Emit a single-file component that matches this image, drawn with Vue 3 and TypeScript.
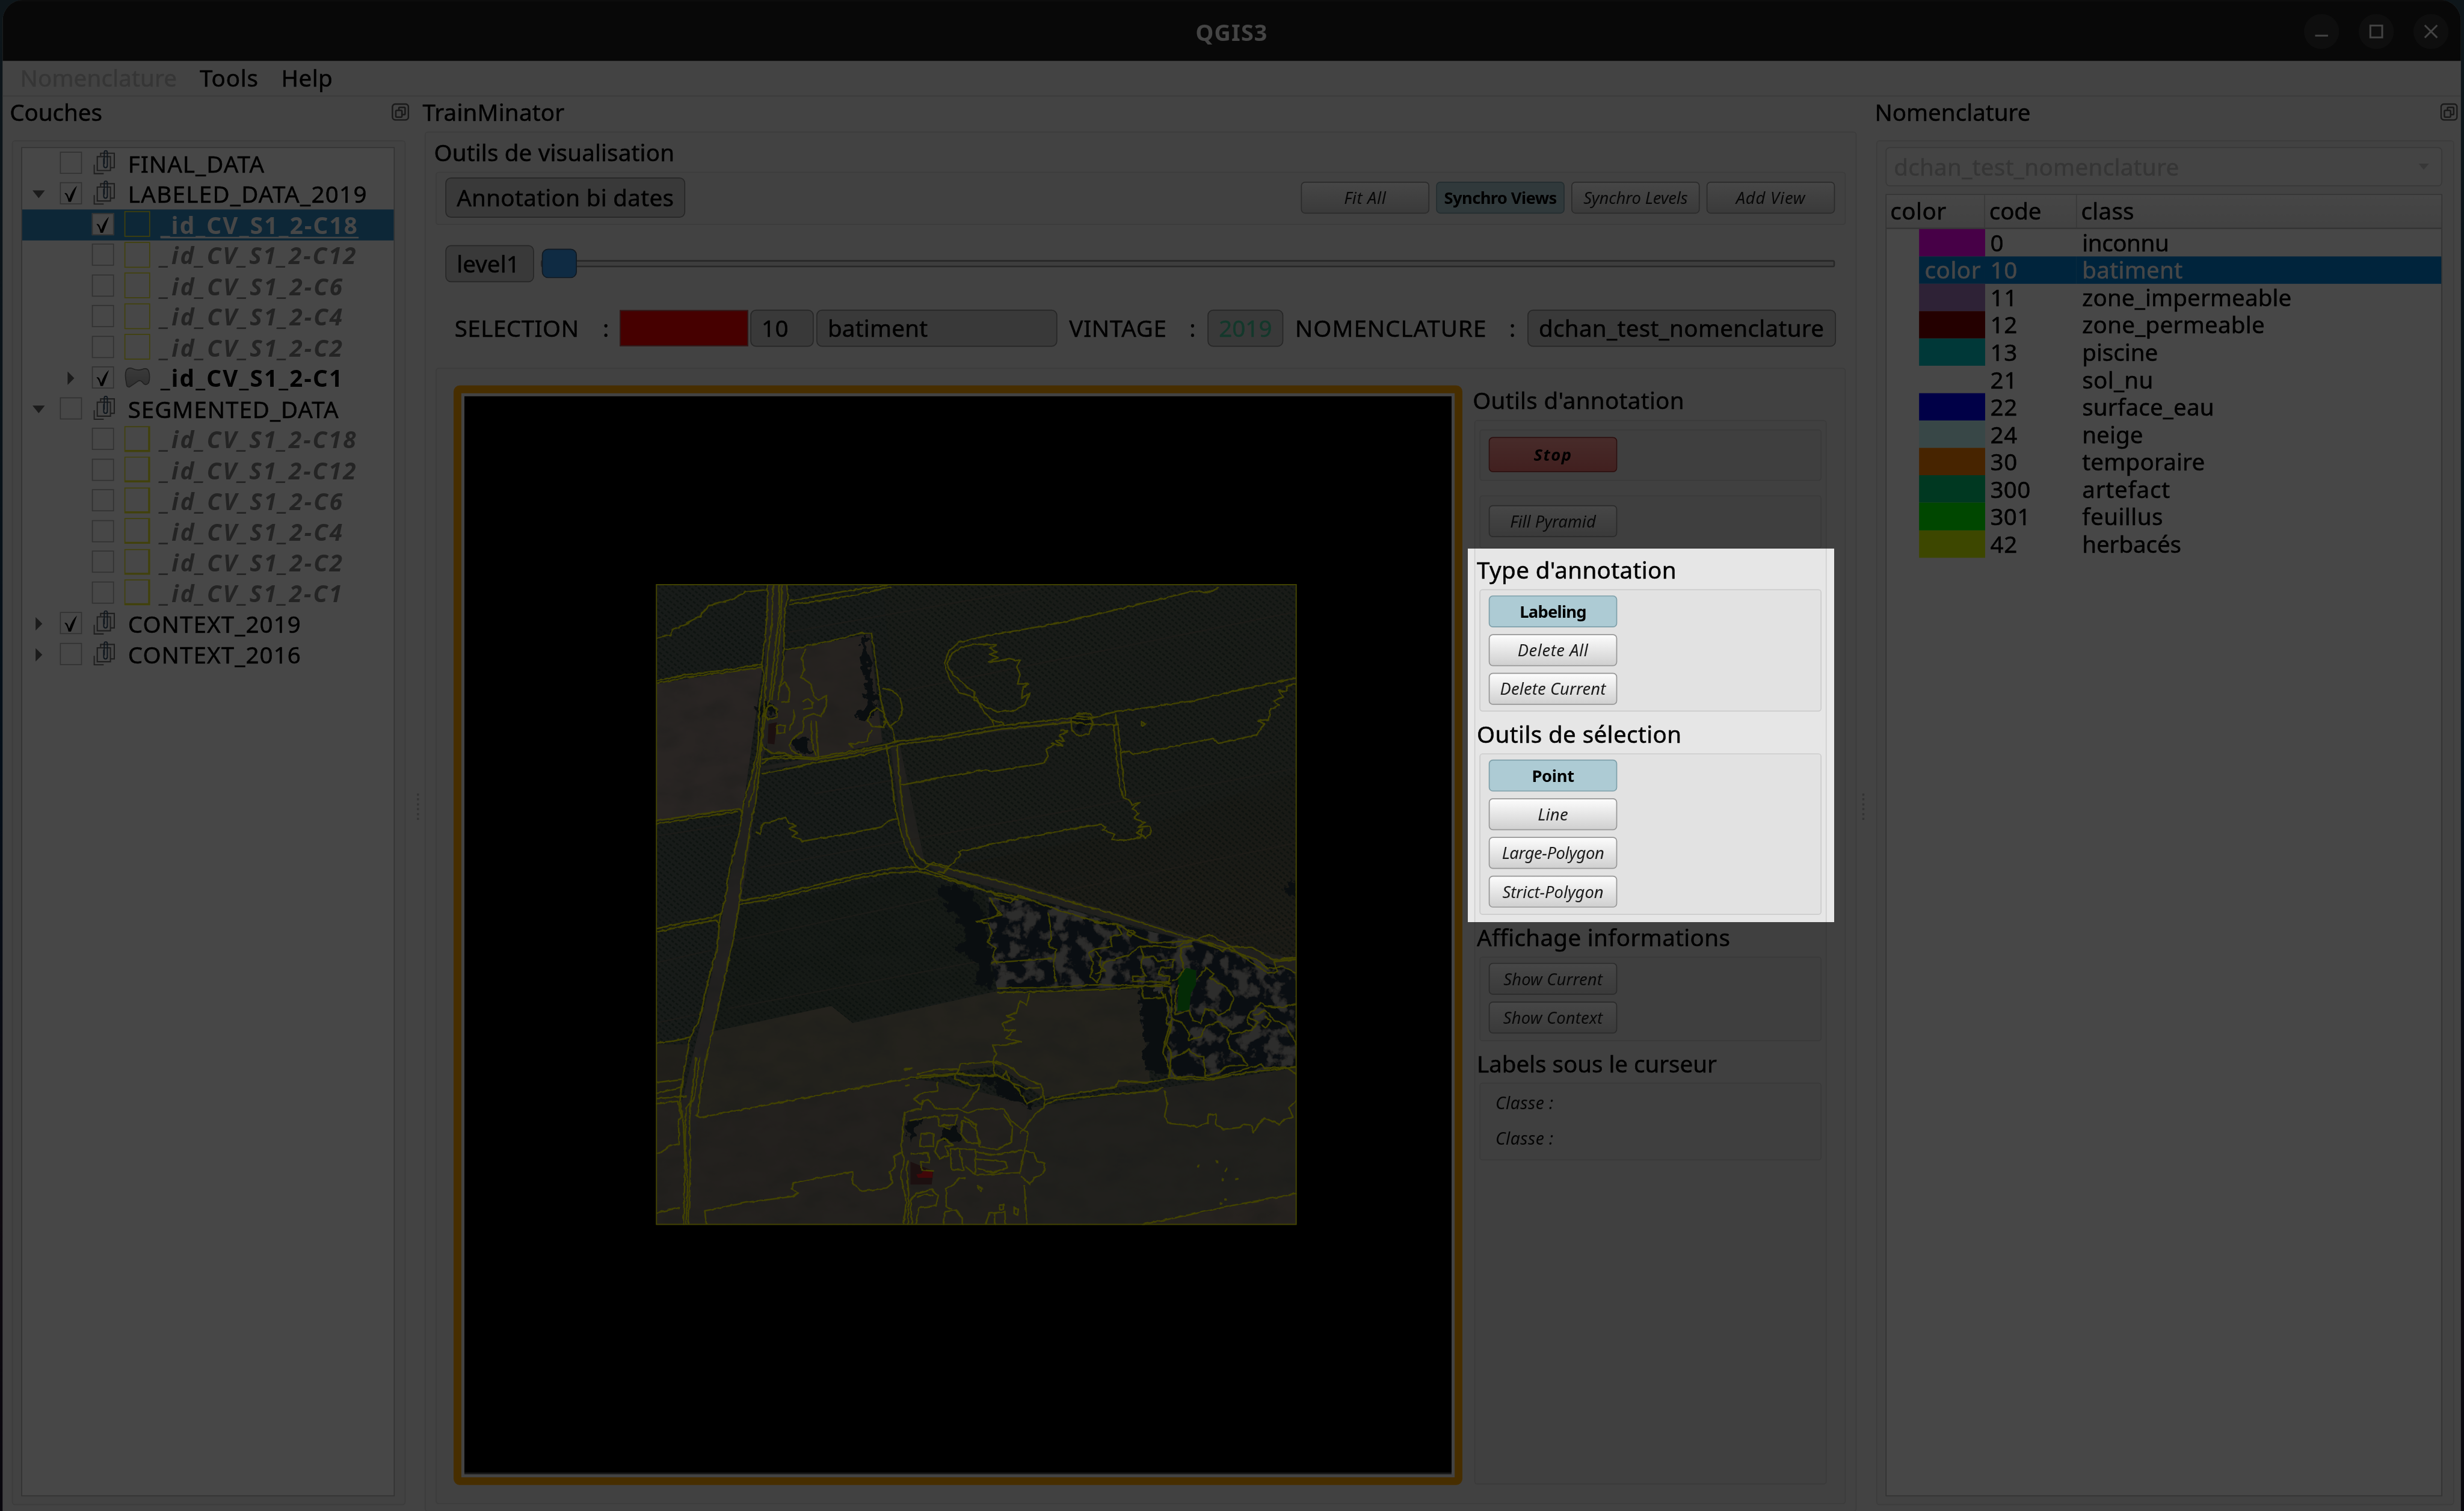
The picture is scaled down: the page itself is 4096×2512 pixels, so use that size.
<script setup lang="ts">
type Kind = 'group' | 'layer' | 'vector'
interface TreeRow {
  label: string
  w: number
  kind: Kind
  arrow?: 'down' | 'right'
  checked?: boolean
  selected?: boolean
  strong?: boolean
  thick?: boolean
}
interface ClassRow {
  code: string
  name: string
  w: number
  color: string
  selected?: boolean
}
interface Btn {
  label: string
  w: number
  on?: boolean
}

const SCALE = 4096 / 4775

// Spreads the letters of a label so that it takes the given width.
const vFit = {
  mounted(el: HTMLElement, binding: { value: number }) {
    const n = (el.textContent ?? '').length
    const natural = el.getBoundingClientRect().width / SCALE
    el.style.letterSpacing = `${((binding.value + 3 - natural) / n).toFixed(3)}px`
  },
}

const tree: TreeRow[] = [
  { label: 'FINAL_DATA', w: 262, kind: 'group' },
  { label: 'LABELED_DATA_2019', w: 461, kind: 'group', arrow: 'down', checked: true },
  { label: '_id_CV_S1_2-C18', w: 381, kind: 'layer', checked: true, selected: true },
  { label: '_id_CV_S1_2-C12', w: 379, kind: 'layer' },
  { label: '_id_CV_S1_2-C6', w: 353, kind: 'layer' },
  { label: '_id_CV_S1_2-C4', w: 353, kind: 'layer' },
  { label: '_id_CV_S1_2-C2', w: 353, kind: 'layer' },
  { label: '_id_CV_S1_2-C1', w: 352, kind: 'vector', arrow: 'right', checked: true, strong: true },
  { label: 'SEGMENTED_DATA', w: 406, kind: 'group', arrow: 'down' },
  { label: '_id_CV_S1_2-C18', w: 379, kind: 'layer', thick: true },
  { label: '_id_CV_S1_2-C12', w: 379, kind: 'layer', thick: true },
  { label: '_id_CV_S1_2-C6', w: 353, kind: 'layer', thick: true },
  { label: '_id_CV_S1_2-C4', w: 353, kind: 'layer', thick: true },
  { label: '_id_CV_S1_2-C2', w: 353, kind: 'layer', thick: true },
  { label: '_id_CV_S1_2-C1', w: 352, kind: 'layer', thick: true },
  { label: 'CONTEXT_2019', w: 333, kind: 'group', arrow: 'right', checked: true },
  { label: 'CONTEXT_2016', w: 333, kind: 'group', arrow: 'right' },
]

const classes: ClassRow[] = [
  { code: '0', name: 'inconnu', w: 165, color: '#ff00ff' },
  { code: '10', name: 'batiment', w: 192, color: '#0080d8', selected: true },
  { code: '11', name: 'zone_impermeable', w: 403, color: '#a47ac2' },
  { code: '12', name: 'zone_permeable', w: 351, color: '#800000' },
  { code: '13', name: 'piscine', w: 144, color: '#00c8c8' },
  { code: '21', name: 'sol_nu', w: 135, color: '#ffffff' },
  { code: '22', name: 'surface_eau', w: 253, color: '#0000ff' },
  { code: '24', name: 'neige', w: 115, color: '#c8ffff' },
  { code: '30', name: 'temporaire', w: 235, color: '#ff8000' },
  { code: '300', name: 'artefact', w: 168, color: '#00c878' },
  { code: '301', name: 'feuillus', w: 154, color: '#00ff00' },
  { code: '42', name: 'herbacés', w: 189, color: '#dcff00' },
]

const viewButtons: Btn[] = [
  { label: 'Fit All', w: 79 },
  { label: 'Synchro Views', w: 215, on: true },
  { label: 'Synchro Levels', w: 199 },
  { label: 'Add View', w: 132 },
]
const typeButtons: Btn[] = [
  { label: 'Labeling', w: 126, on: true },
  { label: 'Delete All', w: 134 },
  { label: 'Delete Current', w: 202 },
]
const selectButtons: Btn[] = [
  { label: 'Point', w: 79, on: true },
  { label: 'Line', w: 56 },
  { label: 'Large-Polygon', w: 195 },
  { label: 'Strict-Polygon', w: 193 },
]
const infoButtons: Btn[] = [
  { label: 'Show Current', w: 189 },
  { label: 'Show Context', w: 190 },
]

// Outlines of the segmentation, in map units.
const outlines: string[] = [
  // main road
  'M290 28L289 90L284 160L276 215L282 240L270 320L268 400L262 440L232 550L224 610L200 700L190 770L178 810L172 880L150 960L130 1050L108 1095L92 1180L84 1240L92 1300L96 1400L92 1534',
  'M303 28L300 120L290 200L284 290L280 330L274 400L266 450L258 510L244 552',
  'M318 28L316 110L306 190L300 250L294 300L286 330L276 400L270 470L262 540L252 580L240 660L228 730L222 790L206 880L190 950L170 1040L150 1120L136 1190L124 1280',
  'M324 28L320 130L312 220L303 270L300 300',
  'M335 28L338 60L330 90L328 180L324 250L318 270L316 300',
  'M122 1140L112 1220L106 1290L108 1400L104 1534M130 1140L126 1180L116 1240L98 1260L96 1340L102 1440L98 1534',
  'M120 1276L132 1282L620 1190L650 1184L740 1178L780 1184L822 1186',
  // left fields
  'M28 154L44 150L60 148L66 134L98 122L112 112L130 104L152 78L176 72L212 60L236 46L290 40',
  'M28 254L100 240L200 228L276 216M28 261L100 246L200 234L278 222',
  'M28 584L120 570L222 556L232 566M28 591L120 577L220 562',
  'M28 838L100 822L160 812L180 802M28 846L100 830L168 818L176 826',
  'M28 1107L70 1102L108 1094M28 1200L88 1192M28 1226L90 1210M28 1238L100 1232M28 1250L80 1244L86 1280L80 1290L82 1344L58 1350L44 1362L28 1368M28 1506L84 1494',
  // upper field by the farm
  'M342 66L380 60L470 44L572 30M340 75L400 68L500 52L582 34',
  'M326 182L356 178L400 168L450 158L512 142L534 142L546 220L556 300L570 350L584 372L590 400',
  'M380 180L370 200L376 230L368 246L392 262L398 290L410 300L430 288L428 310L416 340L398 332L376 340L372 372L352 390L340 406L348 420L372 432',
  'M404 348L410 440M392 348L394 400L404 430M372 304L384 296L396 306L396 318L372 322M316 270L330 258L342 280L340 304L322 306M274 400L284 416L300 424L330 424L348 436L400 440',
  'M286 320L300 312L312 322L312 340L292 346L282 336ZM350 322L354 340L340 372M312 360L330 360L330 378L312 378Z',
  'M560 272L584 278L602 296L608 324L598 346L580 360L562 350M532 330L546 320L562 328L568 346L564 364L540 362L524 350ZM536 370L528 382L526 396L500 402L480 404L492 412',
  // east-west track
  'M276 440L330 430L400 436L500 418L570 404L600 396L700 384L820 362L1005 342L1040 346L1112 326L1150 322L1290 302L1400 276L1534 248',
  'M274 472L300 470L400 448L520 428L580 410L602 404L700 392L840 368L1005 352L1056 358L1112 358L1108 332',
  'M276 450L290 440L340 436L410 440L560 412',
  'M1004 344L1020 336L1048 340L1056 358L1046 380L1024 384L1006 372ZM1016 332L1050 332L1054 344',
  'M822 360L818 348L844 354L846 360M1170 350L1178 356L1170 360Z',
  // rounded parcel
  'M1350 34L1330 46L1290 44L1150 78L980 118L800 150L740 164L716 186L706 214L718 250L740 282L780 294L800 330L822 350',
  'M830 170L780 168L744 176L724 190L712 214L726 240L758 268L776 280L776 300L800 314L830 328L872 324L896 310L906 284L888 296L890 270L904 262L878 262L884 240L876 222L884 208L858 202L834 208L810 210L832 200L812 192L830 186L812 178L830 170',
  // middle parcels
  'M568 404L580 470L590 550L606 620L620 660L640 690L650 700M594 404L600 480L608 560L620 620L640 664L664 684',
  'M604 500L700 482L800 464L820 468L940 448L950 430L944 416L964 406L958 402L984 408L968 394L990 396L976 384L996 374L980 370',
  'M1104 358L1110 420L1118 500L1126 530L1140 534L1148 546L1166 540L1148 556L1164 566L1152 578L1178 588L1160 600L1190 596L1194 608L1180 624L1158 612L1172 604L1168 622L1140 630L1100 628L1108 616L1078 606L1086 598L1070 592L900 622L740 656L744 664L716 692',
  'M1114 358L1122 440L1132 528M1122 424L1140 420L1150 428L1340 390L1350 402L1440 382L1458 356L1444 348L1468 346L1474 320L1494 312L1480 302L1504 292L1492 278L1512 280L1510 268L1534 262',
  'M262 610L272 616L278 592L332 576L340 590L358 596L340 602L360 612L348 620L372 632L480 614L560 598L572 586L598 578',
  // diagonal road
  'M222 772L300 760L400 736L500 712L570 698L640 692L700 712L780 740L840 762L880 770',
  'M222 781L300 768L400 744L500 720L580 706L650 704L720 724L800 748L900 768L980 796L1060 820',
  'M664 684L740 702L820 722L900 744L1000 774L1100 802L1200 834L1290 862L1370 884L1410 900L1440 910L1466 932L1500 926L1534 942',
  'M650 700L680 682L716 692L706 706L690 704M1060 822L1120 830L1150 852L1200 872L1290 866L1330 852L1380 880L1430 882L1480 912L1534 906M1300 862L1360 890L1380 880L1400 898L1466 942L1490 940L1480 916L1534 910',
  // woods
  'M812 764L820 780L836 800L820 812L782 820L810 826L818 850L808 870L826 884L820 904L830 922M824 766L860 776L880 758L910 770M816 810L840 806L830 800',
  'M816 918L960 908M950 800L958 850L952 880L970 886L962 920L968 964M830 978L950 976L1060 970L1240 974M830 988L950 986L1100 980L1150 976L1240 966',
  'M1056 820L1110 828L1124 850L1096 858L1100 880L1060 886L1046 896L1056 920L1050 950L1066 966M1066 966L1080 920L1110 908L1140 900L1166 880L1200 878L1250 884L1264 874L1290 868',
  'M1166 878L1174 900L1168 930L1180 950L1150 950L1150 962L1234 964L1236 950L1210 946L1216 930L1240 930L1248 910L1206 914L1200 904L1172 906M1060 890L1074 906L1070 924L1084 936L1062 944M1140 840L1154 846L1146 856L1136 850Z',
  'M1170 976L1174 1002L1222 1000L1218 986M1240 960L1254 956L1270 934L1262 900L1264 882L1290 878M1224 990L1234 1030L1228 1060L1240 1066L1228 1110L1240 1130L1234 1190M1240 976L1240 1050L1226 1100L1220 1130L1236 1170L1250 1186',
  'M1300 958L1322 930L1340 944L1330 954L1370 976L1386 1000L1376 1030L1350 1042L1340 1030L1318 1028L1310 1060L1290 1054L1282 1030L1250 1040L1250 990L1256 970M1240 1050L1264 1058L1282 1084L1280 1100L1310 1092L1320 1068L1350 1056L1380 1080L1372 1096L1376 1120L1404 1136L1420 1160',
  'M1240 1140L1260 1136L1280 1122L1298 1136L1316 1138L1320 1190M1380 1086L1430 1076L1444 1058L1420 1044L1418 1060L1434 1070M1420 1044L1450 1012L1460 1020L1500 1024L1534 1014M1434 1042L1460 1030L1480 1052L1510 1066L1534 1112M1452 1064L1462 1072L1474 1056L1460 1042',
  'M1236 1190L1280 1186L1340 1190L1420 1166L1450 1158L1460 1166L1510 1164L1534 1180M1420 1160L1370 1162L1350 1178L1320 1184',
  // lower parcels
  'M940 1240L1000 1228L1110 1210L1116 1196L1180 1200L1240 1190L1330 1194L1420 1176L1534 1164M940 1254L970 1240L1100 1228L1200 1220L1220 1212L1198 1218',
  'M1224 1220L1230 1250L1224 1280L1232 1296L1280 1300L1300 1304L1326 1294L1326 1276L1346 1274L1344 1298L1360 1310L1400 1306L1410 1298L1426 1300L1434 1318L1446 1296L1460 1284L1494 1298L1506 1286L1526 1280L1516 1260L1534 1242',
  'M1170 1534L1260 1516L1400 1486L1534 1462M1302 1395h3v3h-3ZM1347 1385h3v3h-3ZM1372 1400l-6 10M1360 1426h3v3h-3ZM1392 1426h3v3h-3ZM1366 1473h3v3h-3ZM1354 1483h3v3h-3Z',
  'M906 990L900 1018L884 1008L876 1034L852 1044L872 1050L842 1060L848 1078L872 1076L852 1096L886 1104L850 1112L818 1112L828 1130L820 1150L840 1160',
  'M612 1168L630 1166L616 1172ZM612 1206h12M640 1180L680 1170L740 1168L744 1156L830 1150L870 1168L880 1182L920 1200L934 1206L942 1240L940 1260L920 1272L908 1290L884 1320',
  'M640 1190L740 1180L830 1184L860 1196L880 1216L900 1250L936 1232M820 1150L824 1180L844 1190L850 1172L862 1200L900 1214L930 1212M740 1168L730 1190L768 1206L790 1206L768 1240L750 1262',
  'M690 1198L690 1220L650 1226L634 1240L650 1250L666 1240L690 1262L740 1262L760 1272L790 1262L848 1262L862 1290L904 1320L894 1360L884 1412L780 1418',
  // farmstead
  'M610 1534L616 1480L604 1420L612 1380L604 1360L612 1270L650 1262L656 1240M620 1534L622 1460L616 1400L622 1384M624 1290L660 1282L690 1280L694 1300L720 1310M626 1368L668 1366L670 1388L650 1386L652 1406L680 1408M650 1320L680 1320L680 1350L648 1350Z',
  'M698 1278L738 1276L730 1300L700 1300M748 1290L764 1294L780 1310L790 1344L760 1340L744 1320ZM752 1280L780 1300L788 1350L830 1358L864 1340L866 1304L846 1274M720 1356L740 1356L752 1406L722 1404ZM740 1356L780 1358L778 1416L756 1398M780 1364L820 1370L890 1360',
  'M690 1340L706 1330L726 1348L706 1350L716 1372L694 1380L684 1362ZM780 1380L850 1386L854 1400L820 1412L784 1402M896 1360L916 1366L924 1384L942 1390L940 1414L916 1424L908 1440L886 1420M756 1424L740 1426L728 1440L710 1450L710 1490L724 1498',
  'M630 1534L626 1478L640 1460L676 1452L692 1466L686 1490L646 1494L638 1534M640 1470L660 1462L680 1466M894 1440L900 1534M784 1444L796 1448L792 1456ZM704 1534L708 1504L734 1500L748 1520L748 1534M802 1534L812 1508L848 1504L850 1534M824 1534V1506M870 1494L880 1498L878 1512L870 1508ZM836 1488h10v10h-10Z',
  'M146 1534L142 1502L240 1482L350 1468L362 1460L346 1450L350 1436L400 1426L490 1410L490 1436L512 1456L570 1448L584 1436L576 1410L590 1398L588 1374L606 1362',
]
const furrows: string[] = [
  'M340 140L940 34', 'M600 280L1534 92', 'M400 520L600 486', 'M28 620L220 590', 'M270 694L1000 560L1534 460',
  'M210 866L690 766', 'M980 750L1534 636', 'M28 918L160 888', 'M196 1026L780 916', 'M1330 870L1534 832', 'M28 1060L140 1036',
]
</script>

<template>
  <div class="stage">
    <div class="desk" :style="{ transform: `scale(${SCALE})` }">
      <div class="window">
        <header class="titlebar">
          <span class="side"></span>
          <span v-fit="137" class="t app-title">QGIS3</span>
          <span class="side controls">
            <svg v-for="k in 3" :key="k" class="ctl" viewBox="-34 -34 68 68">
              <circle r="34" fill="#343434" />
              <path v-if="k === 1" d="M-12.500 8H12.500" />
              <rect v-else-if="k === 2" x="-11.500" y="-11.500" width="23" height="23" />
              <path v-else d="M-12 -12L12 12M12 -12L-12 12" />
            </svg>
          </span>
        </header>

        <nav class="menubar">
          <span v-fit="301" class="t disabled">Nomenclature</span>
          <span v-fit="111" class="t">Tools</span>
          <span v-fit="97" class="t">Help</span>
        </nav>

        <main class="main">
          <section class="dock left">
            <div class="dock-title">
              <span v-fit="176" class="t">Couches</span>
              <svg class="float" viewBox="0 0 34 34">
                <rect x="1.500" y="1.500" width="31" height="31" rx="6" />
                <rect x="8" y="14" width="12" height="13" rx="2" />
                <path d="M14 13V9.500Q14 8 15.500 8H24.500Q26 8 26 9.500V20.500Q26 22 24.500 22H21" />
              </svg>
            </div>
            <div class="frame left-frame">
              <div class="tree">
                <div v-for="(r, i) in tree" :key="i" class="row" :class="[r.kind, { selected: r.selected, strong: r.strong }]">
                  <span class="expander">
                    <svg v-if="r.arrow === 'down'" viewBox="0 0 26 26"><path d="M1 6H25L13 21Z" /></svg>
                    <svg v-else-if="r.arrow === 'right'" viewBox="0 0 26 26"><path d="M7 0L20 13L7 26Z" /></svg>
                  </span>
                  <span class="check">
                    <svg v-if="r.checked" viewBox="0 0 40 40"><path d="M7 20Q12 17 15 27L16.500 31Q22 14 32 5Q26 22 20 37H15Q13 25 7 20Z" /></svg>
                  </span>
                  <svg v-if="r.kind === 'group'" class="gicon" viewBox="0 0 42 47">
                    <path d="M14 11V6H40.500V34H34M7.500 12.500H33V39.500H7.500ZM1.500 28V45.500H20" />
                    <path class="clip" d="M20 16V30Q20 34 23.500 34Q27 34 27 30V5Q27 1 24 1Q21 1 21 5V27" />
                  </svg>
                  <svg v-else-if="r.kind === 'vector'" class="sym" viewBox="0 0 50 50">
                    <defs><linearGradient id="poly" x2="0" y2="1"><stop offset="0" stop-color="#d0d0d0" /><stop offset="1" stop-color="#a8a8a8" /></linearGradient></defs>
                    <path d="M4 10Q8 5 15 7Q25 12 34 9Q44 5 47 12Q51 24 47 35Q42 41 37 36Q31 28 26 32Q18 38 10 43Q4 44 4 36Q0 18 4 10Z" fill="url(#poly)" stroke="#777" stroke-width="2" />
                  </svg>
                  <span v-else class="sym box" :class="{ thick: r.thick }"></span>
                  <span v-fit="r.w" class="t name">{{ r.label }}</span>
                </div>
              </div>
            </div>
          </section>

          <div class="splitter first"><i v-for="k in 6" :key="k"></i></div>

          <section class="dock center">
            <div class="dock-title"><span v-fit="272" class="t">TrainMinator</span></div>
            <div class="frame center-frame">
              <div class="viz-title"><span v-fit="463" class="t">Outils de visualisation</span></div>
              <div class="frame viz">
                <span class="field w465"><span v-fit="418" class="t">Annotation bi dates</span></span>
                <div class="viz-buttons">
                  <button v-for="b in viewButtons" :key="b.label" class="btn" :class="{ on: b.on }"><span v-fit="b.w" class="t">{{ b.label }}</span></button>
                </div>
              </div>
              <div class="level">
                <span class="field w172"><span v-fit="119" class="t">level1</span></span>
                <div class="slider"><div class="handle"></div></div>
              </div>
              <div class="selection">
                <span v-fit="238" class="t cap">SELECTION</span><span class="t colon near">:</span>
                <span class="swatch-red"></span>
                <span class="field w123"><span v-fit="49" class="t">10</span></span>
                <span class="field w467"><span v-fit="191" class="t">batiment</span></span>
                <span v-fit="186" class="t cap">VINTAGE</span><span class="t colon">:</span>
                <span class="field w147"><span v-fit="100" class="t vintage">2019</span></span>
                <span v-fit="368" class="t cap">NOMENCLATURE</span><span class="t colon">:</span>
                <span class="field w598"><span v-fit="550" class="t">dchan_test_nomenclature</span></span>
              </div>
              <div class="frame view">
                <div class="canvas-frame">
                  <div class="canvas">
                    <svg class="map" viewBox="27 27 1508 1508">
                      <defs>
                        <pattern id="crop" width="11" height="11" patternUnits="userSpaceOnUse" patternTransform="rotate(38)">
                          <path d="M0 5H11" stroke="#20352c" stroke-width="4" stroke-dasharray="7 4" opacity=".7" />
                        </pattern>
                        <linearGradient id="dry" x1="0" y1="0" x2=".35" y2="1">
                          <stop offset="0" stop-color="#525c4e" />
                          <stop offset="1" stop-color="#66614f" />
                        </linearGradient>
                        <filter id="grain" x="0" y="0" width="1" height="1">
                          <feTurbulence type="fractalNoise" baseFrequency=".012 .02" numOctaves="5" seed="12" />
                          <feColorMatrix values="0 0 0 0 .1  0 0 0 0 .12  0 0 0 0 .1  1.500 0 0 0 -.55" />
                        </filter>
                        <filter id="blotch" x="0" y="0" width="1" height="1">
                          <feTurbulence type="fractalNoise" baseFrequency=".028" numOctaves="4" seed="4" />
                          <feColorMatrix values="0 0 0 0 .37  0 0 0 0 .36  0 0 0 0 .34  7 0 0 0 -3.500" />
                          <feComposite in2="SourceGraphic" operator="in" result="b" />
                          <feMerge><feMergeNode in="SourceGraphic" /><feMergeNode in="b" /></feMerge>
                        </filter>
                        <filter id="ragged" x="-.1" y="-.1" width="1.200" height="1.200">
                          <feTurbulence type="fractalNoise" baseFrequency=".05" numOctaves="3" seed="8" />
                          <feDisplacementMap in="SourceGraphic" scale="40" xChannelSelector="R" yChannelSelector="G" />
                        </filter>
                        <filter id="jag" x="-.05" y="-.05" width="1.100" height="1.100">
                          <feTurbulence type="fractalNoise" baseFrequency=".09" numOctaves="1" seed="3" />
                          <feDisplacementMap in="SourceGraphic" scale="7" xChannelSelector="R" yChannelSelector="G" />
                        </filter>
                      </defs>
                      <rect x="27" y="27" width="1508" height="1508" fill="#56635a" />
                      <path d="M560 30L1535 27V500L1130 640L660 680L600 404Z" fill="#5a6456" />
                      <path d="M720 690L1140 610L1535 470V940L1300 860L840 720Z" fill="url(#dry)" />
                      <path d="M225 790L640 710L800 760L830 980L480 1060L160 1110Z" fill="#4d5c4e" />
                      <rect x="27" y="27" width="1508" height="1508" fill="url(#crop)" />
                      <path d="M28 262L278 222L232 556L28 586Z" fill="#94857f" />
                      <path d="M334 184L530 144L560 400L410 436L290 420L280 330Z" fill="#8a7d74" />
                      <path d="M160 1080L440 1020L490 1060L830 985L906 990L1170 980L1190 1200L940 1235L830 1160L620 1190L124 1280Z" fill="#807b68" />
                      <path d="M28 1110H108L84 1240H28Z" fill="#75705e" />
                      <path d="M28 1240H90L96 1534H28ZM108 1280L620 1190L700 1200L900 1250L940 1280L900 1534H104Z" fill="#7f766c" />
                      <path d="M900 1260L1534 1166V1462L1170 1534H894Z" fill="#777469" />
                      <path d="M1170 1534L1534 1462V1534Z" fill="#8a7b70" />
                      <path d="M292 28H336L316 290L270 470L240 700L196 930L126 1250L106 1534H94L90 1240L160 940L192 760L232 560L274 390Z" fill="#7d7874" />
                      <path d="M274 456L570 408L1005 344V354L600 402L660 684L840 720L1300 858L1534 910V940L1300 872L840 746L690 706L610 640L580 414L276 466Z" fill="#7c786e" />
                      <g stroke="#7c6a5c" stroke-width="3" opacity=".6" fill="none"><path v-for="f in furrows" :key="f" :d="f" /></g>
                      <rect x="27" y="27" width="1508" height="1508" filter="url(#grain)" opacity=".5" />
                      <g filter="url(#blotch)">
                        <path d="M810 764L960 780L1110 826L1290 868L1400 900L1534 940V1166L1240 1190L1168 1060L1166 976L830 980L816 918Z" fill="#273642" />
                      </g>
                      <g filter="url(#ragged)" fill="#26343b">
                        <path d="M690 735L760 745L800 800L815 870L820 975L780 970L790 920L730 880L760 850L700 770Z" />
                        <path d="M1165 980H1232V1180L1180 1170Z" />
                        <path d="M508 150L520 150L545 320L530 350L495 340L525 315Z" />
                        <path d="M1508 740L1534 720V790ZM255 315L310 310L305 340L275 335ZM1010 340L1048 335L1045 360L1015 365ZM340 395L380 390L400 420L370 430ZM780 1180L850 1186L900 1230L910 1260L870 1250Z" />
                        <path d="M616 1290L650 1285L626 1350ZM700 1300L740 1310L740 1340L705 1335Z" />
                      </g>
                      <path d="M292 356L312 352L306 404L290 402ZM626 1386L680 1408L676 1440H626Z" fill="#663c3a" />
                      <path d="M640 1416L652 1414L656 1408H678V1424H644Z" fill="#ee1a22" />
                      <path d="M1256 944L1276 930L1298 936L1298 970L1286 990L1282 1030L1254 1032L1256 985Z" fill="#109b18" />
                      <g class="outline" filter="url(#jag)"><path v-for="o in outlines" :key="o" :d="o" /></g>
                      <rect class="outline" x="28" y="28" width="1506" height="1506" />
                    </svg>
                  </div>
                </div>
                <div class="tools">
                  <div class="tools-title"><span v-fit="407" class="t">Outils d'annotation</span></div>
                  <div class="frame tools-frame">
                    <div class="frame sub stop-box"><button class="btn stop"><span v-fit="72" class="t">Stop</span></button></div>
                    <div class="frame sub fill-box"><button class="btn"><span v-fit="163" class="t">Fill Pyramid</span></button></div>
                    <div class="sub-title first"><span v-fit="384" class="t">Type d'annotation</span></div>
                    <div class="frame sub h237">
                      <button v-for="b in typeButtons" :key="b.label" class="btn" :class="{ on: b.on }"><span v-fit="b.w" class="t">{{ b.label }}</span></button>
                    </div>
                    <div class="sub-title"><span v-fit="394" class="t">Outils de sélection</span></div>
                    <div class="frame sub h313">
                      <button v-for="b in selectButtons" :key="b.label" class="btn" :class="{ on: b.on }"><span v-fit="b.w" class="t">{{ b.label }}</span></button>
                    </div>
                    <div class="sub-title"><span v-fit="488" class="t">Affichage informations</span></div>
                    <div class="frame sub h164">
                      <button v-for="b in infoButtons" :key="b.label" class="btn"><span v-fit="b.w" class="t">{{ b.label }}</span></button>
                    </div>
                    <div class="sub-title last"><span v-fit="462" class="t">Labels sous le curseur</span></div>
                    <div class="frame sub labels">
                      <p><span v-fit="110" class="t">Classe :</span></p>
                      <p><span v-fit="110" class="t">Classe :</span></p>
                    </div>
                  </div>
                </div>
              </div>
            </div>
          </section>

          <div class="splitter"><i v-for="k in 6" :key="k"></i></div>

          <section class="dock right">
            <div class="dock-title">
              <span v-fit="299" class="t">Nomenclature</span>
              <svg class="float" viewBox="0 0 34 34">
                <rect x="1.500" y="1.500" width="31" height="31" rx="6" />
                <rect x="8" y="14" width="12" height="13" rx="2" />
                <path d="M14 13V9.500Q14 8 15.500 8H24.500Q26 8 26 9.500V20.500Q26 22 24.500 22H21" />
              </svg>
            </div>
            <div class="frame right-frame">
              <div class="combo">
                <span v-fit="550" class="t disabled">dchan_test_nomenclature</span>
                <svg viewBox="0 0 22 14"><path d="M1 1H21L11 13Z" fill="#c4c4c4" /></svg>
              </div>
              <div class="table">
                <div class="thead">
                  <span class="th c1"><span v-fit="106" class="t">color</span></span>
                  <span class="th c2"><span v-fit="98" class="t">code</span></span>
                  <span class="th c3"><span v-fit="100" class="t">class</span></span>
                </div>
                <div v-for="c in classes" :key="c.code" class="trow" :class="{ selected: c.selected }">
                  <span class="cell swatch" :style="{ background: c.color }"><span v-if="c.selected" v-fit="106" class="t">color</span></span>
                  <span class="cell code"><span v-fit="c.code.length * 25" class="t">{{ c.code }}</span></span>
                  <span class="cell cls"><span v-fit="c.w" class="t">{{ c.name }}</span></span>
                </div>
              </div>
            </div>
          </section>
        </main>
      </div>
      <div class="spotlight"></div>
    </div>
  </div>
</template>

<style>
html, body { margin: 0; background: #000; overflow: hidden; }
</style>

<style scoped>
* { box-sizing: border-box; }
.stage { width: 4096px; height: 2512px; overflow: hidden; background: #111; }
.desk {
  position: relative;
  width: 4775px;
  height: 2930px;
  transform-origin: 0 0;
  overflow: hidden;
  background: linear-gradient(#33505f 0, #24455c 25%, #10355c 50%, #302038 80%, #201a30 100%);
  font-family: "Noto Sans", "Open Sans", sans-serif;
  font-size: 45px;
  line-height: 50px;
  color: #000;
}
.t { display: inline-block; flex: none; margin-left: -1px; white-space: pre; -webkit-text-stroke: .6px currentColor; }
.disabled { color: #bebebe; }

.window {
  display: flex;
  flex-direction: column;
  height: 2930px;
  margin: 0 6px 0 5px;
  background: #efefef;
  border-radius: 40px 40px 0 0;
  overflow: hidden;
}
.titlebar {
  display: flex;
  flex: none;
  align-items: center;
  height: 118px;
  background: #1d1d1d;
  border-top: 3px solid #2e2e2e;
}
.side { flex: 1; display: flex; padding-left: 24px; }
.controls { justify-content: flex-end; gap: 38px; padding: 0 24px 0 0; }
.ctl { width: 68px; height: 68px; fill: none; stroke: #f0f0f0; stroke-width: 3.500; }
.ctl circle { stroke: none; }
.app-title { color: #f2f2f2; font-weight: 700; margin: 3px 0 0; font-size: 44px; -webkit-text-stroke: 0; }

.menubar {
  display: flex;
  flex: none;
  align-items: center;
  height: 69px;
  padding: 0 0 1px 35px;
  border-bottom: 2px solid #d0d0d0;
}
.menubar .t { margin: 0 45px 0 -1px; }

.main { display: flex; flex: 1; min-height: 0; }
.dock { display: flex; flex-direction: column; flex: none; }
.left { width: 788px; }
.center { width: 2785px; }
.right { flex: 1; }
.dock-title { display: flex; flex: none; align-items: center; justify-content: space-between; height: 60px; padding-left: 15px; }
.center .dock-title { padding-left: 5px; }
.right .dock-title { padding: 0 6px 0 12px; }
.float { width: 34px; height: 34px; fill: none; stroke: #5a5a5a; stroke-width: 3; }
.frame { background: rgba(0, 0, 0, .013); border: 2px solid rgba(0, 0, 0, .1); border-radius: 6px; }

.splitter { display: flex; flex: none; flex-direction: column; align-items: center; justify-content: center; gap: 5.400px; width: 22px; padding-top: 10px; }
.splitter.first { padding-left: 12px; }
.splitter i { width: 4px; height: 4px; background: #b4b4b4; }

.left-frame { width: 763px; height: 2645px; margin: 25px 0 0 18px; padding: 11px 19px 15px 16px; }
.tree { height: 100%; background: #fff; border: 2px solid #b2b2b2; }
.row { display: flex; align-items: center; height: 59.500px; }
.layer, .vector { padding-left: 62px; }
.expander { display: flex; justify-content: center; width: 64px; margin-right: 9px; }
.expander svg { width: 26px; height: 26px; fill: #616161; }
.check { display: flex; width: 43px; height: 43px; margin-bottom: 3px; background: #fff; border: 2px solid #b0b0b0; }
.check svg { width: 39px; height: 39px; }
.gicon { width: 42px; height: 47px; margin: 0 26px 5px 22px; fill: none; stroke: #6e6e6e; stroke-width: 2.500; }
.gicon .clip { stroke: #35506a; stroke-width: 2.300; }
.sym { width: 50px; height: 50px; margin: 0 20px 3px 20px; }
.sym.box { border: 2.500px solid #e8e82c; }
.sym.thick { border-right-width: 4px; border-bottom-width: 4px; }
.layer .name, .vector .name { margin-left: 0; -webkit-text-stroke: 0; }
.layer .name { font-weight: 700; font-style: italic; color: #808080; }
.row.selected { background: #308cc6; }
.row.selected .name { color: #fff; font-style: normal; text-decoration: underline; text-decoration-thickness: 3px; text-underline-offset: 6px; text-decoration-skip-ink: none; }
.strong .name { font-weight: 700; }

.center-frame { display: flex; flex-direction: column; width: 2775px; height: 2700px; margin: 8px 0 0 8px; }
.viz-title { display: flex; align-items: center; height: 76px; padding-left: 17px; }
.viz { display: flex; align-items: center; justify-content: space-between; height: 103px; margin: 0 19px; padding: 0 19px 3px 17px; }
.viz-buttons { display: flex; gap: 13px; }
.field { display: flex; flex: none; align-items: center; height: 72px; padding-left: 21px; background: #cbcbcb; border: 2px solid #8a8a8a; border-radius: 11px; }
.viz .field { height: 78px; }
.w465 { width: 465px; }
.w172 { width: 172px; }
.btn {
  display: flex;
  flex: none;
  align-items: center;
  justify-content: center;
  width: 249px;
  height: 62px;
  padding: 0;
  font: italic 32px/40px "Noto Sans", "Open Sans", sans-serif;
  color: #1c1c1c;
  background: linear-gradient(#fcfcfc, #d0d0d0);
  border: 2px solid #979797;
  border-radius: 8px;
}
.btn .t { margin: 0; -webkit-text-stroke: 0; }
.btn.on { font-style: normal; font-weight: 700; color: #000; background: #adcbd4; border-color: #7fa0aa; }
.level { display: flex; flex: none; align-items: center; height: 150px; padding: 0 40px 0 38px; }
.slider { position: relative; flex: 1; height: 14px; margin-left: 13px; background: #dadada; border: 3px solid #8c8c8c; border-radius: 4px; }
.handle { position: absolute; left: -1px; top: -25px; width: 68px; height: 57px; background: #3899f0; border: 2px solid #3c5a78; border-radius: 12px; }
.selection { display: flex; flex: none; align-items: center; height: 99px; padding-left: 57px; }
.selection .cap { margin-right: 44px; }
.selection .colon { width: 13px; margin: 0 22px 0 0; }
.selection .near { margin: 0 20px 0 2px; }
.swatch-red { flex: none; width: 249px; height: 70px; margin-right: 4px; background: #fa0000; border: 2px solid #a06060; }
.w123 { width: 123px; margin-right: 5px; }
.w467 { width: 467px; margin-right: 24px; }
.w147 { width: 147px; margin-right: 24px; }
.w598 { width: 598px; }
.vintage { color: #47c89a; }

.view { display: flex; flex: none; height: 2202px; margin: 28px 19px 0; padding: 32px 0 0 33px; }
.canvas-frame { flex: none; width: 1955px; height: 2131px; padding: 6px; border: 15px solid #ffa500; border-radius: 12px; background: #efefef; }
.canvas { height: 2089px; padding: 364px 0 0 371px; background: #000; border-bottom: 3px solid #606060; }
.map { display: block; width: 1242px; height: 1242px; }
.outline, .outline path { fill: none; stroke: #f2f200; stroke-width: 3.600; stroke-opacity: .95; stroke-linejoin: round; }

.tools { width: 687px; margin-left: 21px; }
.tools-title { display: flex; align-items: center; height: 67px; padding-bottom: 9px; }
.tools-frame { width: 683px; height: 2063px; margin-left: 2px; padding: 16px 8px 0; }
.sub { display: flex; flex-direction: column; gap: 13px; padding: 10px 16px 0; background: rgba(0, 0, 0, .016); }
.stop-box { height: 100px; padding-top: 13px; }
.stop { height: 68px; font-weight: 700; color: #000; background: linear-gradient(#ff9a95, #ea7270); border-color: #a33232; }
.fill-box { height: 103px; margin-top: 28px; padding-top: 17px; }
.sub-title { display: flex; align-items: center; height: 81px; padding-top: 7px; margin-left: -4px; }
.sub-title.first { height: 79px; padding-top: 5px; }
.sub-title.last { height: 80px; }
.h237 { height: 237px; }
.h313 { height: 313px; }
.h164 { height: 164px; }
.labels { display: block; height: 151px; padding: 3px 0 0 30px; font-size: 33px; font-style: italic; color: #111; }
.labels p { margin: 0; height: 69px; line-height: 69px; }
.labels .t { -webkit-text-stroke: 0; }

.right-frame { width: 1120px; height: 2645px; margin: 25px 0 0 14px; padding: 11px 0 0 16px; }
.combo { display: flex; align-items: center; justify-content: space-between; width: 1079px; height: 76px; padding: 0 23px 0 15px; background: #f4f4f4; border: 2px solid #c8c8c8; border-radius: 8px; }
.combo svg { width: 22px; height: 14px; }
.table { width: 1079px; height: 2524px; margin-top: 15px; background: #fff; border: 2px solid #b2b2b2; }
.thead { display: flex; height: 65.500px; background: linear-gradient(#fafafa, #ececec); border-bottom: 3px solid #bababa; }
.th { display: flex; align-items: center; border-right: 2px solid #c8c8c8; }
.c1 { width: 191px; padding-left: 8px; }
.c2 { width: 178px; padding-left: 9px; }
.c3 { flex: 1; padding-left: 9px; border-right: 0; }
.trow { display: flex; height: 53.100px; padding-left: 63px; }
.cell { display: flex; align-items: center; }
.swatch { width: 128px; padding-left: 12px; }
.code { width: 177px; padding-left: 11px; }
.cls { flex: 1; padding-left: 12px; }
.selected .cell { background: #0080d8; color: #fff; }

.spotlight { position: absolute; left: 2845px; top: 1063px; width: 710px; height: 724px; box-shadow: 0 0 0 5000px rgba(0, 0, 0, .72); }
</style>
